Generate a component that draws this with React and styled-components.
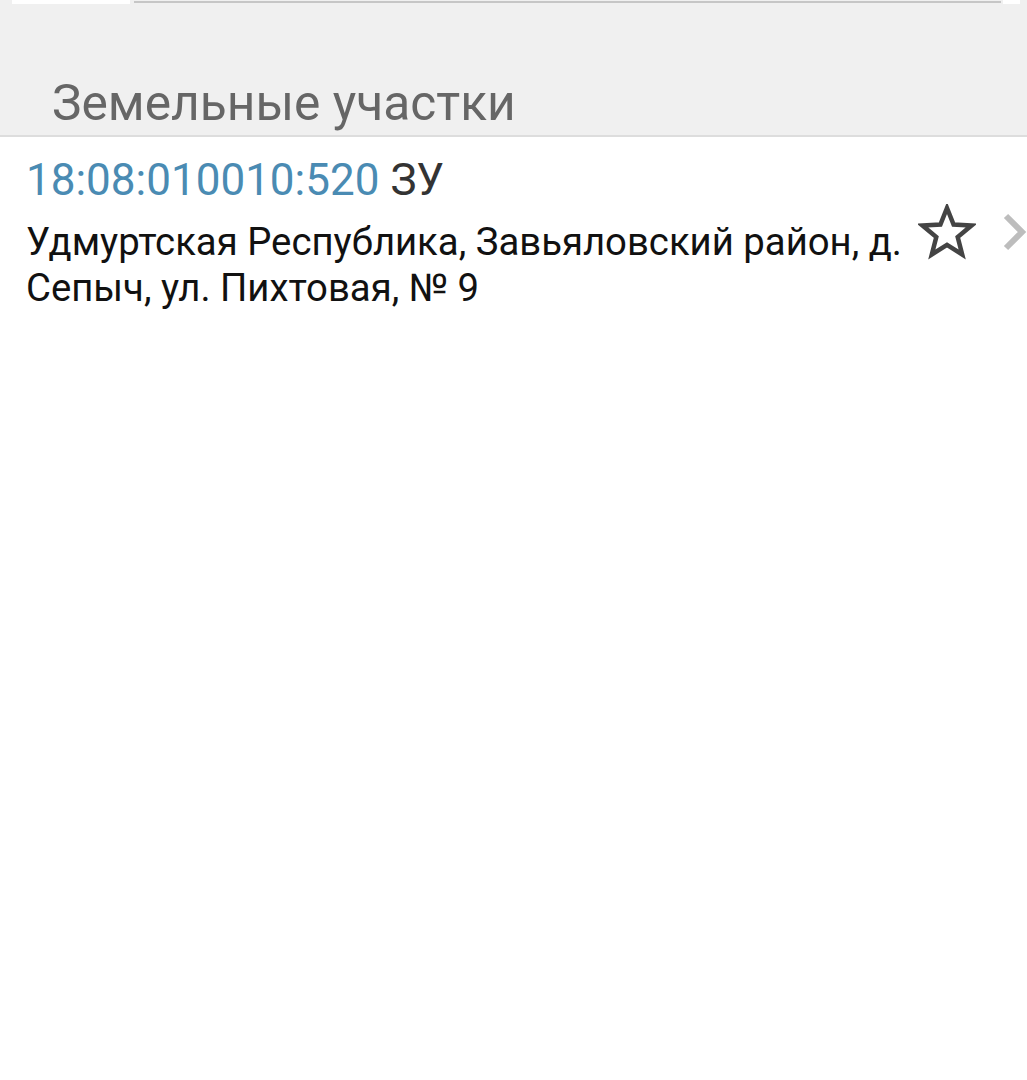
import React from 'react';
import styled, { createGlobalStyle } from 'styled-components';

const GlobalStyle = createGlobalStyle`
  html, body {
    margin: 0;
    padding: 0;
    background: #ffffff;
  }

  body {
    font-family: Roboto, "Noto Sans", sans-serif;
    -webkit-font-smoothing: antialiased;
  }
`;

const Page = styled.div`
  width: 1027px;
  min-height: 1080px;
  background: #ffffff;
  overflow: hidden;
`;

const Header = styled.header`
  background: #f0f0f0;
  border-bottom: 2px solid #dddddd;
`;

const SearchStrip = styled.div`
  display: flex;
  align-items: flex-start;
  height: 4px;
  padding: 0 7px 0 12px;
`;

const StripBlock = styled.div`
  width: ${({ $width }) => $width}px;
  height: 4px;
  background: #ffffff;
`;

const StripLine = styled.div`
  flex: 1;
  margin: 1px 2px 0 4px;
  height: 2px;
  background: #c6c6c6;
`;

const SectionTitle = styled.h1`
  margin: 0;
  padding: 71px 0 4px 52px;
  font-size: 49.7px;
  line-height: 56px;
  font-weight: 400;
  color: #666666;
`;

const List = styled.ul`
  margin: 0;
  padding: 0;
  list-style: none;
`;

const Item = styled.li`
  display: flex;
  align-items: center;
  padding: 18px 0 18px 26px;
`;

const ItemBody = styled.div`
  flex: 1;
  min-width: 0;
`;

const ItemTitle = styled.div`
  font-size: 44px;
  line-height: 50px;
  color: #333333;

  .number {
    color: #4a8bb3;
  }
`;

const ItemAddress = styled.div`
  margin-top: 14px;
  font-size: 38.3px;
  line-height: 46px;
  color: #111111;
`;

const Actions = styled.div`
  display: flex;
  align-items: center;
  gap: 26px;
  margin: 0 -1px 2px 12px;
`;

const IconButton = styled.button`
  display: flex;
  align-items: center;
  justify-content: center;
  padding: 0;
  border: 0;
  background: none;
  color: ${({ $color }) => $color};
`;

const StarIcon = () => (
  <svg width="58" height="56" viewBox="0 0 58 56" fill="none">
    <path
      d="M29 4 L35.6 20.6 L53.5 21.6 L39.7 33 L44.2 50.5 L29 40.8 L13.8 50.5 L18.3 33 L4.5 21.6 L22.4 20.6 Z"
      stroke="currentColor"
      strokeWidth="4.5"
      strokeLinejoin="miter"
    />
  </svg>
);

const ChevronIcon = () => (
  <svg width="26" height="38" viewBox="0 0 26 38" fill="none">
    <path d="M4 3 L20 19 L4 35" stroke="currentColor" strokeWidth="6" />
  </svg>
);

const parcels = [
  {
    number: '18:08:010010:520',
    kind: 'ЗУ',
    address: 'Удмуртская Республика, Завьяловский район, д. Сепыч, ул. Пихтовая, № 9',
  },
];

const App = () => (
  <Page>
    <GlobalStyle />
    <Header>
      <SearchStrip>
        <StripBlock $width={118} />
        <StripLine />
        <StripBlock $width={17} />
      </SearchStrip>
      <SectionTitle>Земельные участки</SectionTitle>
    </Header>

    <List>
      {parcels.map((p) => (
        <Item key={p.number}>
          <ItemBody>
            <ItemTitle>
              <span className="number">{p.number}</span> {p.kind}
            </ItemTitle>
            <ItemAddress>{p.address}</ItemAddress>
          </ItemBody>
          <Actions>
            <IconButton $color="#444444" aria-label="В избранное">
              <StarIcon />
            </IconButton>
            <IconButton $color="#bdbdbd" aria-label="Открыть">
              <ChevronIcon />
            </IconButton>
          </Actions>
        </Item>
      ))}
    </List>
  </Page>
);

export default App;
